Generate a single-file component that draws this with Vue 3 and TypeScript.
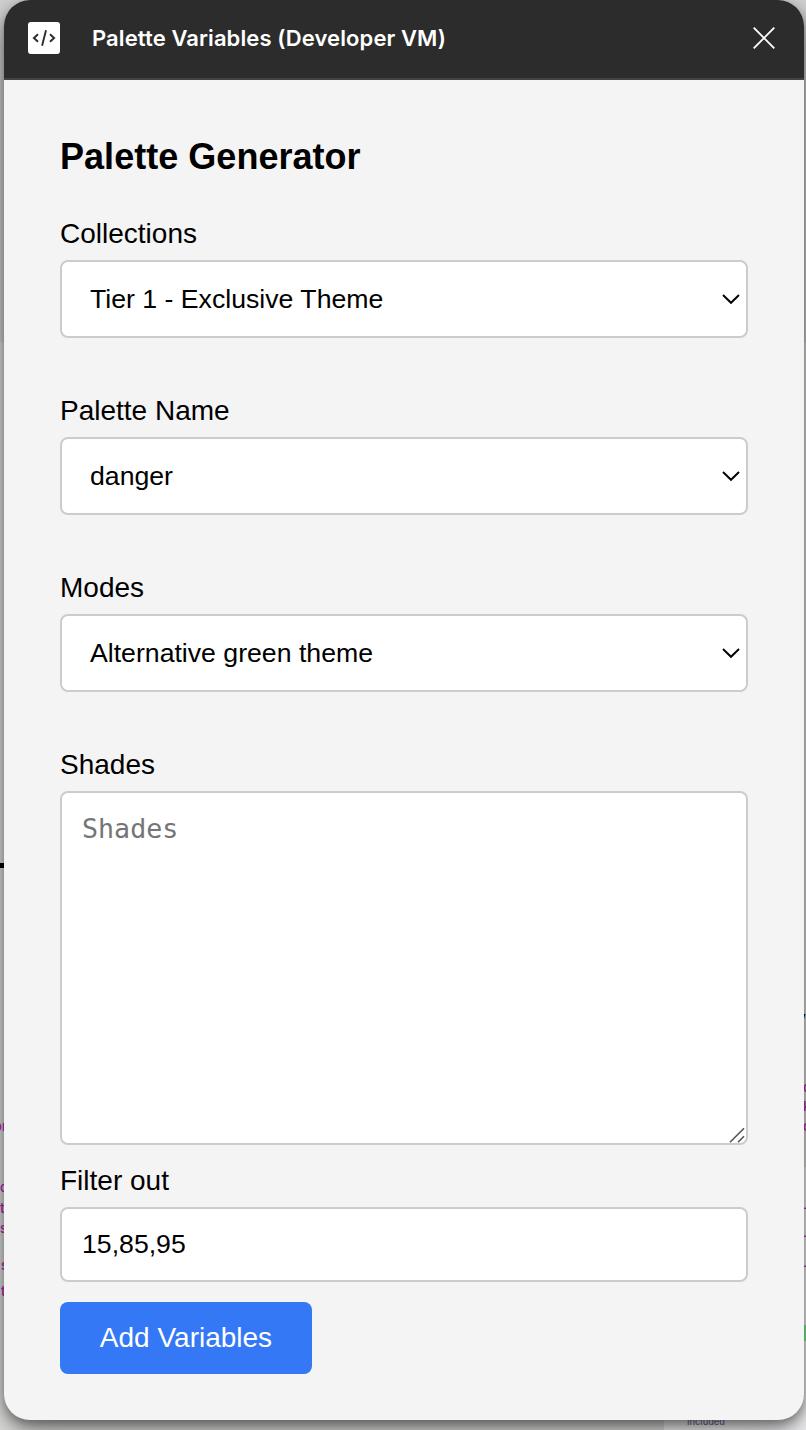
<script setup lang="ts">
import { ref } from 'vue'

interface SelectField {
  label: string
  value: string
}

interface Fragment {
  text: string
  top: number
  shift: number
  dark?: boolean
}

const fields = ref<SelectField[]>([
  { label: 'Collections', value: 'Tier 1 - Exclusive Theme' },
  { label: 'Palette Name', value: 'danger' },
  { label: 'Modes', value: 'Alternative green theme' },
])
const shades = ref<string>('')
const filterOut = ref<string>('15,85,95')

// Canvas lettering that runs underneath the dialog's edges.
const leftFragments: Fragment[] = [
  { text: 'or', top: 1118, shift: -6 },
  { text: 'c', top: 1179, shift: 0 },
  { text: 't', top: 1200, shift: 0 },
  { text: 's', top: 1220, shift: 0 },
  { text: 's', top: 1257, shift: 1 },
  { text: 't', top: 1283, shift: 1 },
]
const rightFragments: Fragment[] = [
  { text: 'y', top: 1009, shift: -6, dark: true },
  { text: 'o', top: 1079, shift: -1 },
  { text: 'k', top: 1098, shift: -1 },
  { text: 'o', top: 1118, shift: -1 },
  { text: '-', top: 1199, shift: -2 },
  { text: '-', top: 1227, shift: -2 },
  { text: '-', top: 1257, shift: -2 },
]
</script>

<template>
  <div class="stage">
    <div class="canvas" aria-hidden="true">
      <div class="area upper"></div>
      <div class="area note"></div>
      <div class="area side"></div>
      <div class="rule"></div>
      <div class="green"></div>
      <span
        v-for="f in leftFragments"
        :key="'l' + f.top"
        class="fragment"
        :style="{ top: f.top + 'px', left: f.shift + 'px' }"
      >{{ f.text }}</span>
      <span
        v-for="f in rightFragments"
        :key="'r' + f.top"
        class="fragment"
        :class="{ dark: f.dark }"
        :style="{ top: f.top + 'px', left: 804 + f.shift + 'px' }"
      >{{ f.text }}</span>
    </div>
    <section class="dialog">
      <header class="bar">
        <svg class="logo" width="32" height="32" viewBox="0 0 32 32">
          <rect width="32" height="32" rx="3" fill="#fff" />
          <path d="M10 12.2 5.9 16l4.1 3.8M22 12.2l4.1 3.8-4.1 3.8M18 8.3 14.1 23.7" fill="none" stroke="#2c2c2c" stroke-width="1.9" />
        </svg>
        <h1 class="name">Palette Variables (Developer VM)</h1>
        <button class="close" aria-label="Close">
          <svg width="24" height="24" viewBox="0 0 24 24">
            <path d="M1.7 1.7 22.3 22.3M22.3 1.7 1.7 22.3" fill="none" stroke="#fff" stroke-width="1.9" />
          </svg>
        </button>
      </header>
      <main class="content">
        <h2 class="title">Palette Generator</h2>
        <div v-for="field in fields" :key="field.label" class="group">
          <label class="label">{{ field.label }}</label>
          <div class="control">
            <select v-model="field.value" class="select">
              <option>{{ field.value }}</option>
            </select>
            <svg class="chevron" width="20" height="12" viewBox="0 0 20 12">
              <path d="M2 2 10 9.8 18 2" fill="none" stroke="#000" stroke-width="1.9" />
            </svg>
          </div>
        </div>
        <label class="label">Shades</label>
        <div class="control">
          <textarea v-model="shades" class="textarea" placeholder="Shades"></textarea>
          <svg class="grip" width="16" height="16" viewBox="0 0 16 16">
            <path d="M1 15.2 15 1.2M9 15.2 15 9.2" fill="none" stroke="#555" stroke-width="1.6" />
          </svg>
        </div>
        <label class="label filter-label">Filter out</label>
        <input v-model="filterOut" class="input" type="text" />
        <button class="submit">Add Variables</button>
      </main>
    </section>
  </div>
</template>

<style>
html,
body {
  margin: 0;
  overflow: hidden;
}
</style>

<style scoped>
.stage {
  position: relative;
  box-sizing: border-box;
  width: 806px;
  height: 1430px;
  padding-left: 4px;
  overflow: hidden;
  background: #e2e2e1;
  font-family: "Liberation Sans", Arial, sans-serif;
  color: #000;
}
.canvas {
  position: absolute;
  inset: 0;
}
.area,
.rule,
.green,
.fragment {
  position: absolute;
}
.upper {
  inset: 0 0 auto;
  height: 342px;
  background: #d3d3d3;
}
.note {
  left: 664px;
  right: 0;
  bottom: 0;
  height: 40px;
  background: #f8f8fa;
}
.note::after {
  content: "Included";
  position: absolute;
  left: 23px;
  bottom: 2px;
  font: 500 9.2px/12px Inter, sans-serif;
  color: #70709a;
}
.side {
  right: 0;
  top: 1167px;
  width: 3px;
  height: 230px;
  background: #f4f4f4;
}
.rule {
  left: 0;
  top: 863px;
  width: 4px;
  height: 5px;
  background: #000;
}
.green {
  right: 0;
  top: 1325px;
  width: 2px;
  height: 16px;
  background: #80f898;
}
.fragment {
  font: 600 13px/16px Inter, sans-serif;
  color: #c030ba;
}
.dark {
  color: #000;
}
.dialog {
  position: relative;
  width: 800px;
  height: 1420px;
  border-radius: 26px;
  overflow: hidden;
  background: #f4f4f4;
  box-shadow: 0 4px 10px rgba(0, 0, 0, 0.3), 0 12px 30px rgba(0, 0, 0, 0.46);
}
.bar {
  box-sizing: border-box;
  height: 80px;
  display: flex;
  align-items: center;
  padding: 0 28px 2px 24px;
  background: #2c2c2c;
  border-bottom: 2px solid #444;
}
.name {
  flex: 1;
  margin: 0 0 0 32px;
  font: 600 22px/32px Inter, sans-serif;
  letter-spacing: 0.1px;
  color: #fff;
}
.close {
  display: flex;
  padding: 0;
  border: 0;
  background: none;
}
.content {
  padding: 56px 56px 0;
}
.title {
  margin: 0 0 40px;
  font-size: 36px;
  line-height: 42px;
  font-weight: 700;
  letter-spacing: 0.03px;
}
.label {
  display: block;
  height: 32px;
  margin-bottom: 10px;
  font-size: 28px;
  line-height: 32px;
}
.group {
  margin-bottom: 57px;
}
.group .control {
  height: 78px;
}
.control {
  position: relative;
}
.select,
.textarea,
.input {
  box-sizing: border-box;
  display: block;
  width: 688px;
  margin: 0;
  border: 2px solid #ccc;
  border-radius: 8px;
  background: #fff;
  color: #000;
  outline: none;
  font: 26.67px/32px "Liberation Sans", Arial, sans-serif;
}
.select {
  height: 78px;
  padding: 0 28px;
  appearance: none;
}
.chevron {
  position: absolute;
  right: 7px;
  top: 33px;
}
.textarea {
  height: 354px;
  padding: 20px;
  resize: none;
  font-family: "DejaVu Sans Mono", monospace;
}
.textarea::placeholder {
  color: #757575;
}
.grip {
  position: absolute;
  right: 3px;
  bottom: 2px;
}
.filter-label {
  margin-top: 20px;
}
.input {
  height: 75px;
  padding: 0 20px;
}
.submit {
  display: block;
  width: 252px;
  height: 72px;
  margin-top: 20px;
  padding: 0;
  border: 0;
  border-radius: 8px;
  background: #3478f6;
  color: #fff;
  font: 28px/32px "Liberation Sans", Arial, sans-serif;
}
</style>
